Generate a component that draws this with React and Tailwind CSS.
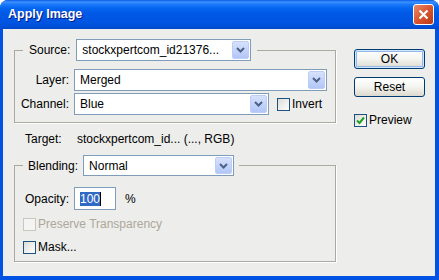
import React from "react";

const font = { fontFamily: '"Liberation Sans", Arial, sans-serif' };

function Chevron() {
  return (
    <svg width="9" height="6" viewBox="0 0 9 6">
      <polyline points="1,1 4.5,4.5 8,1" fill="none" stroke="#4D6185" strokeWidth="2" />
    </svg>
  );
}

function Combo({ value, width, height = "h-[22px]" }) {
  return (
    <div className={`${width} ${height} flex items-stretch bg-white border border-[#7F9DB9] p-[1px]`}>
      <div className="flex-1 min-w-0 flex items-center pl-[4px] overflow-hidden whitespace-nowrap text-[12px] text-black">
        {value}
      </div>
      <div className="w-[17px] flex items-center justify-center rounded-[2px] border border-[#BCCEF8] bg-gradient-to-b from-[#D6E1FD] to-[#B2C6F6]">
        <Chevron />
      </div>
    </div>
  );
}

function Check({ checked, disabled, label }) {
  return (
    <div className="flex items-center h-[13px]">
      <div
        className={`w-[13px] h-[13px] border flex items-center justify-center ${
          disabled
            ? "border-[#CAC8BB] bg-[#F4F4F2]"
            : "border-[#1C5180] bg-gradient-to-br from-[#DCDCD7] to-white"
        }`}
      >
        {checked && (
          <svg width="9" height="9" viewBox="0 0 9 9">
            <polyline points="1,4.5 3.5,7 8,1.5" fill="none" stroke="#21A121" strokeWidth="2" />
          </svg>
        )}
      </div>
      <span className={`ml-[2px] text-[12px] leading-[13px] ${disabled ? "text-[#ACA899]" : "text-black"}`}>
        {label}
      </span>
    </div>
  );
}

function XpButton({ label, primary }) {
  return (
    <div
      className={`w-[71px] h-[20px] rounded-[3px] border border-[#003C74] flex items-center justify-center text-[12px] text-black bg-gradient-to-b from-white via-[#F4F4F0] to-[#DCD9CE] ${
        primary ? "shadow-[inset_0_0_0_1px_#CEE7FF,inset_0_0_0_2px_#98B8EA]" : ""
      }`}
    >
      {label}
    </div>
  );
}

export default function App() {
  return (
    <div style={font} className="w-[439px] h-[280px] flex flex-col rounded-t-[8px] bg-[#0053E2] overflow-hidden">
      {/* title bar */}
      <div className="h-[29px] flex items-center justify-between pl-[8px] pr-[5px] bg-[linear-gradient(to_bottom,#0A5DE8_0%,#3D8FFD_7%,#1A7AFB_15%,#0565F0_28%,#0059E6_45%,#0055E2_75%,#0050DA_90%,#0046C8_100%)]">
        <span className="text-white font-bold text-[12.5px] [text-shadow:1px_1px_0_#0A1883]">Apply Image</span>
        <div className="w-[21px] h-[21px] rounded-[3px] border border-white flex items-center justify-center bg-gradient-to-br from-[#E8896B] via-[#D9552F] to-[#B83A14]">
          <svg width="11" height="11" viewBox="0 0 11 11">
            <path d="M1.5 1.5 L9.5 9.5 M9.5 1.5 L1.5 9.5" stroke="white" strokeWidth="2.2" />
          </svg>
        </div>
      </div>

      {/* client area */}
      <div className="flex-1 ml-[3px] mr-[4px] mb-[4px] bg-[#EDEDEB] flex pl-[11px] pt-[10px]">
        {/* left column */}
        <div className="w-[322px] flex flex-col">
          <fieldset className="border border-[#ABAA9E] shadow-[1px_1px_0_#fff] px-0 pb-[7px]">
            <legend className="ml-[8px] px-[6px] flex items-center gap-[6px]">
              <span className="text-[12px] text-black">Source:</span>
              <Combo value="stockxpertcom_id21376..." width="w-[175px]" />
            </legend>
            <div className="flex flex-col gap-[2px] pt-[8px]">
              <div className="flex items-center">
                <span className="w-[54px] text-right text-[12px] text-black">Layer:</span>
                <div className="ml-[5px]">
                  <Combo value="Merged" width="w-[253px]" />
                </div>
              </div>
              <div className="flex items-center">
                <span className="w-[54px] text-right text-[12px] text-black">Channel:</span>
                <div className="ml-[5px]">
                  <Combo value="Blue" width="w-[195px]" />
                </div>
                <div className="ml-[8px]">
                  <Check label="Invert" />
                </div>
              </div>
            </div>
          </fieldset>

          <div className="mt-[8px] h-[15px] flex items-center pl-[11px] text-[12px] text-black">
            <span className="w-[52px]">Target:</span>
            <span>stockxpertcom_id... (..., RGB)</span>
          </div>

          <fieldset className="mt-[9px] border border-[#ABAA9E] shadow-[1px_1px_0_#fff] pb-[7px]">
            <legend className="ml-[8px] px-[5px] flex items-center gap-[5px]">
              <span className="text-[12px] text-black">Blending:</span>
              <Combo value="Normal" width="w-[151px]" height="h-[21px]" />
            </legend>
            <div className="pt-[11px] pl-[10px] flex items-center">
              <span className="w-[49px] text-[12px] text-black">Opacity:</span>
              <div className="w-[42px] h-[23px] border border-[#7F9DB9] bg-white flex items-center pl-[5px]">
                <span className="bg-[#316AC5] text-white text-[12px] leading-[14px] px-0">100</span>
                <span className="w-[1px] h-[14px] bg-black" />
              </div>
              <span className="ml-[9px] text-[12px] text-black">%</span>
            </div>
            <div className="pl-[8px] mt-[8px] flex flex-col gap-[10px]">
              <Check label="Preserve Transparency" disabled />
              <Check label="Mask..." />
            </div>
          </fieldset>
        </div>

        {/* right column */}
        <div className="ml-[18px] flex flex-col pt-[10px]">
          <XpButton label="OK" primary />
          <div className="mt-[8px]">
            <XpButton label="Reset" />
          </div>
          <div className="mt-[17px]">
            <Check label="Preview" checked />
          </div>
        </div>
      </div>
    </div>
  );
}
